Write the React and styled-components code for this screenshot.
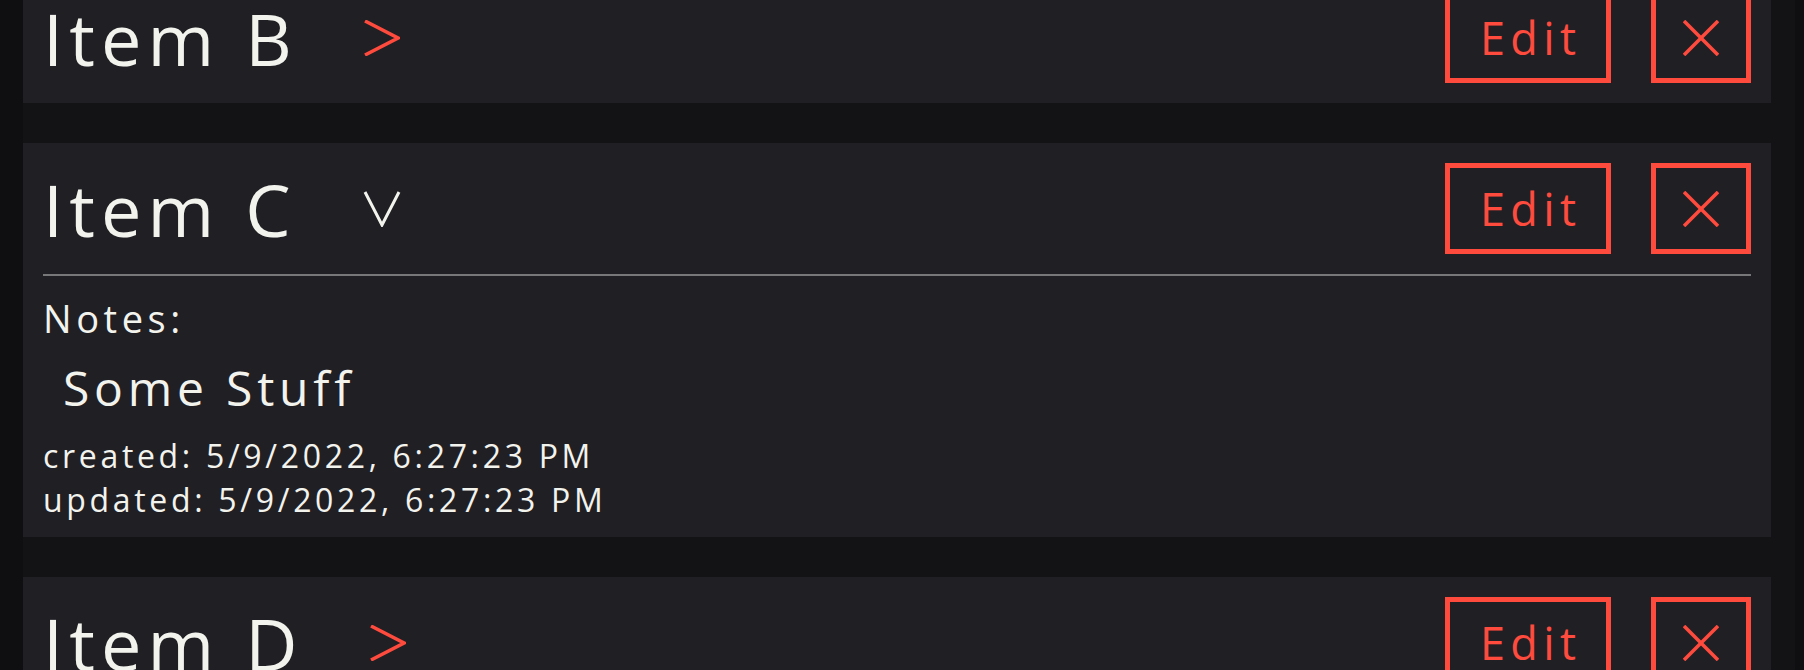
import styled, { createGlobalStyle } from "styled-components";

const GlobalStyle = createGlobalStyle`
  html, body {
    margin: 0;
    padding: 0;
    background: #0f0f11;
    overflow: hidden;
  }
  body {
    font-family: "Open Sans", "Noto Sans", sans-serif;
    color: #f3f3ee;
  }
`;

const items = [
  { id: "b", name: "Item B", open: false },
  {
    id: "c",
    name: "Item C",
    open: true,
    notes: "Some Stuff",
    created: "5/9/2022, 6:27:23 PM",
    updated: "5/9/2022, 6:27:23 PM",
  },
  { id: "d", name: "Item D", open: false },
];

const Chevron = ({ open }) =>
  open ? (
    <svg width="38" height="36" viewBox="0 0 38 36">
      <polyline points="2,1 19,34 36,1" fill="none" stroke="#f3f3ee" strokeWidth="3" />
    </svg>
  ) : (
    <svg width="36" height="36" viewBox="0 0 36 36">
      <polyline points="1,1 34,18 1,35" fill="none" stroke="#ff4b3e" strokeWidth="3.5" />
    </svg>
  );

const CloseIcon = () => (
  <svg width="36" height="36" viewBox="0 0 36 36">
    <line x1="1" y1="1" x2="35" y2="35" stroke="#ff4b3e" strokeWidth="3.5" />
    <line x1="35" y1="1" x2="1" y2="35" stroke="#ff4b3e" strokeWidth="3.5" />
  </svg>
);

const ItemCard = ({ name, open, notes, created, updated }) => {
  return (
    <Card>
      <Header>
        <Title>{name}</Title>
        <Toggle>
          <Chevron open={open} />
        </Toggle>
        <Actions>
          <ActionButton $w={166}>Edit</ActionButton>
          <ActionButton $w={100}>
            <CloseIcon />
          </ActionButton>
        </Actions>
      </Header>
      {open && (
        <Body>
          <Divider />
          <NotesLabel>Notes:</NotesLabel>
          <NotesText>{notes}</NotesText>
          <MetaBlock>
            <Meta>created: {created}</Meta>
            <Meta>updated: {updated}</Meta>
          </MetaBlock>
        </Body>
      )}
    </Card>
  );
};

export default function App() {
  return (
    <>
      <GlobalStyle />
      <Page>
        <List>
          {items.map((item) => (
            <ItemCard key={item.id} {...item} />
          ))}
        </List>
      </Page>
    </>
  );
}

const Page = styled.div`
  height: 670px;
  overflow: hidden;
  padding: 0 9px 0 23px;
`;

const List = styled.div`
  background: #131316;
  margin-top: -28px;
  padding-right: 24px;
  display: flex;
  flex-direction: column;
  gap: 40px;
`;

const Card = styled.div`
  background: #201f24;
  padding: 20px;
`;

const Header = styled.div`
  display: flex;
  align-items: center;
  height: 91px;
`;

const Title = styled.h2`
  margin: 0;
  font-size: 72px;
  font-weight: 400;
  line-height: 1;
  letter-spacing: 0.085em;
  color: #f3f3ee;
`;

const Toggle = styled.span`
  display: flex;
  align-items: center;
  margin-left: 66px;
`;

const Actions = styled.div`
  margin-left: auto;
  display: flex;
  gap: 40px;
`;

const ActionButton = styled.button`
  box-sizing: border-box;
  width: ${(p) => p.$w}px;
  height: 91px;
  display: flex;
  align-items: center;
  justify-content: center;
  padding: 0;
  background: transparent;
  border: 5px solid #ff4b3e;
  color: #ff4b3e;
  font-family: "Open Sans", "Noto Sans", sans-serif;
  font-size: 45px;
  letter-spacing: 0.12em;
  text-indent: 0.12em;
  cursor: pointer;
`;

const Body = styled.div``;

const Divider = styled.hr`
  border: none;
  height: 2px;
  margin: 20px 0 0;
  background: #77777a;
`;

const NotesLabel = styled.div`
  margin-top: 20px;
  font-size: 38px;
  line-height: 1.2;
  letter-spacing: 0.12em;
`;

const NotesText = styled.div`
  margin-top: 17px;
  padding-left: 20px;
  font-size: 48px;
  line-height: 1.2;
  letter-spacing: 0.1em;
`;

const MetaBlock = styled.div`
  margin-top: 23px;
  display: flex;
  flex-direction: column;
  gap: 10px;
`;

const Meta = styled.div`
  font-size: 32px;
  line-height: 34px;
  letter-spacing: 0.115em;
`;
